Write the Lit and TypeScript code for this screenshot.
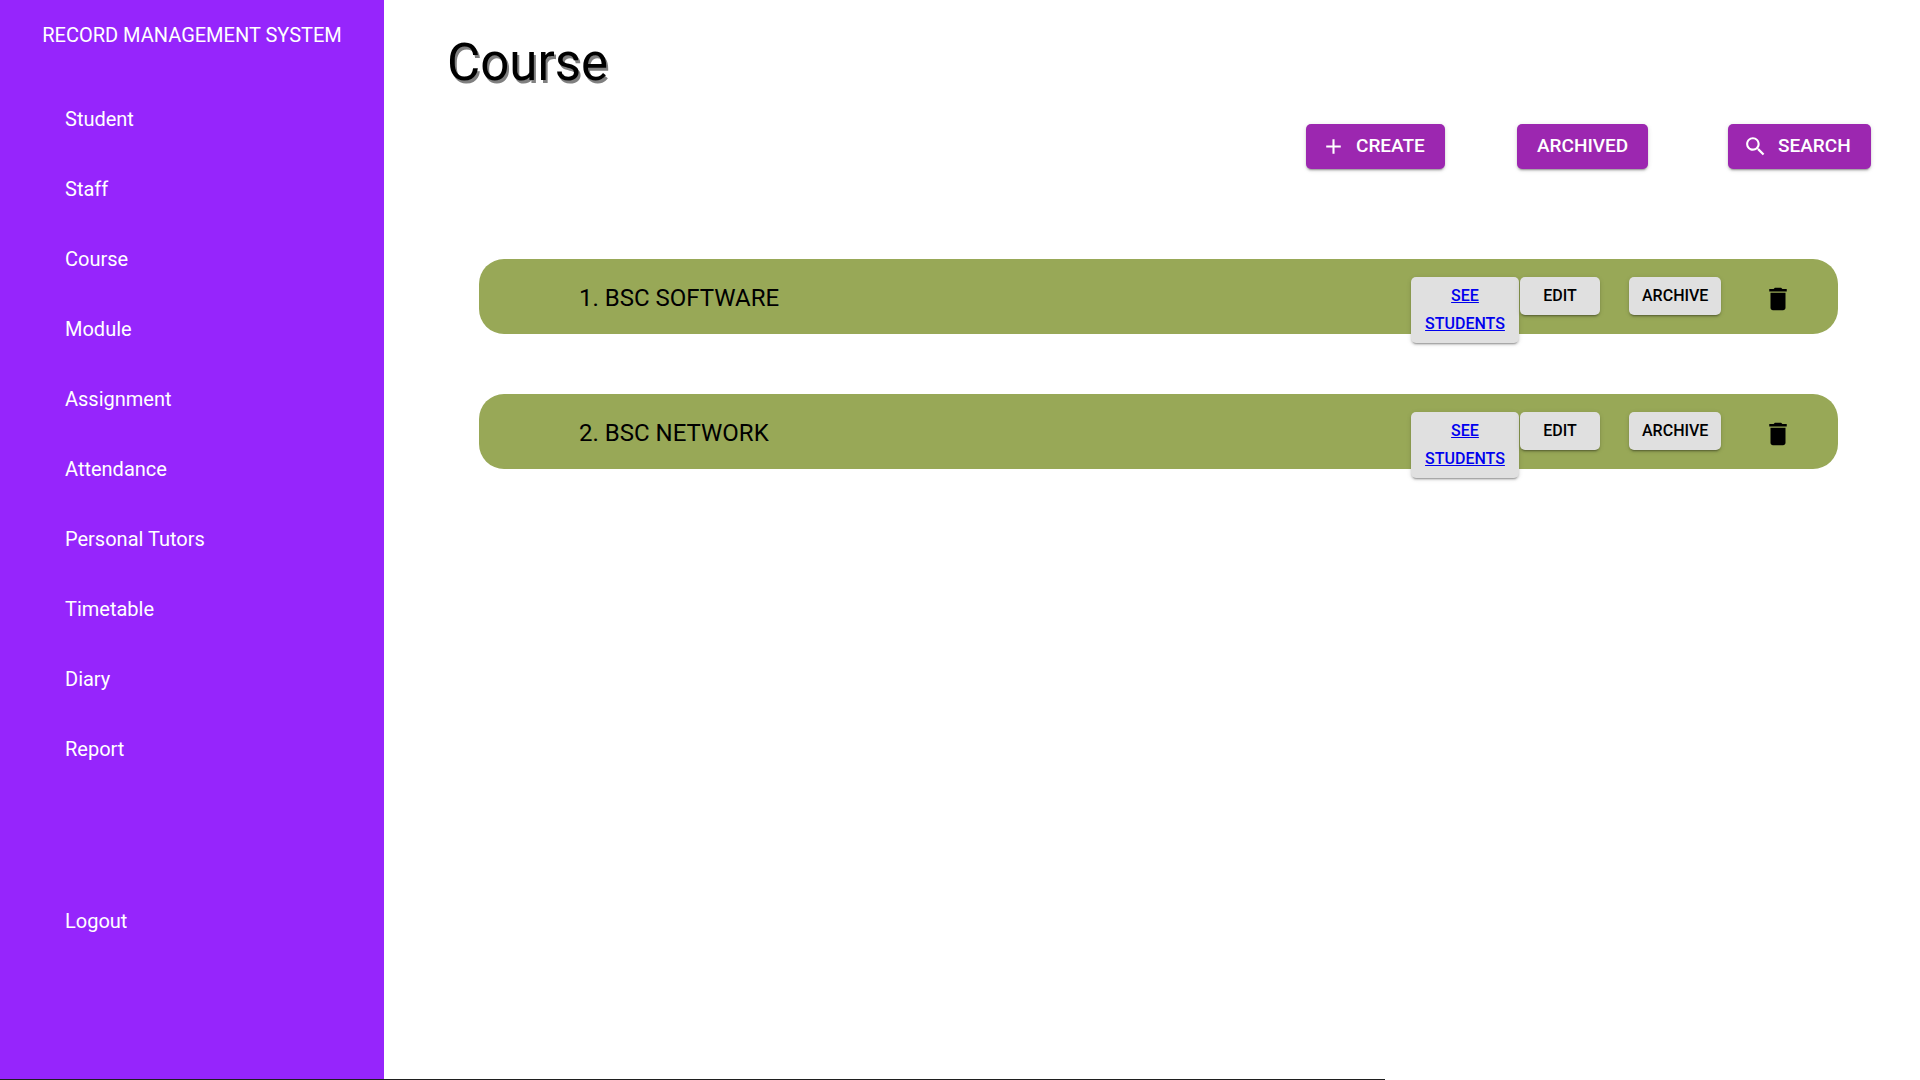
import { LitElement, html, css, svg } from "lit";
import { customElement, property, state } from "lit/decorators.js";

const ICONS = {
  add: "M19 13h-6v6h-2v-6H5v-2h6V5h2v6h6v2z",
  search:
    "M15.5 14h-.79l-.28-.27C15.41 12.59 16 11.11 16 9.5 16 5.91 13.09 3 9.5 3S3 5.91 3 9.5 5.91 16 9.5 16c1.61 0 3.09-.59 4.23-1.57l.27.28v.79l5 4.99L20.49 19l-4.99-5zm-6 0C7.01 14 5 11.99 5 9.5S7.01 5 9.5 5 14 7.01 14 9.5 11.99 14 9.5 14z",
  trash:
    "M6 19c0 1.1.9 2 2 2h8c1.1 0 2-.9 2-2V7H6v12zM19 4h-3.5l-1-1h-5l-1 1H5v2h14V4z",
};

const icon = (name: keyof typeof ICONS) => html`
  <svg class="icon" viewBox="0 0 24 24" aria-hidden="true">
    ${svg`<path d=${ICONS[name]} />`}
  </svg>
`;

@customElement("side-nav")
class SideNav extends LitElement {
  static styles = css`
    :host {
      display: block;
      background: #9625fc;
      color: #fff;
      font-size: 20px;
      line-height: 30px;
    }
    .brand {
      margin: 0;
      padding: 20px 0 34px;
      font-size: 20px;
      font-weight: 400;
      line-height: 30px;
      text-align: center;
    }
    .list {
      list-style: none;
      margin: 0;
      padding: 0;
    }
    .link {
      display: block;
      padding: 20px 65px;
      color: inherit;
      text-decoration: none;
    }
    .logout {
      margin-top: 102px;
    }
  `;

  private items = [
    "Student",
    "Staff",
    "Course",
    "Module",
    "Assignment",
    "Attendance",
    "Personal Tutors",
    "Timetable",
    "Diary",
    "Report",
  ];

  render() {
    return html`
      <h2 class="brand">RECORD MANAGEMENT SYSTEM</h2>
      <nav>
        <ul class="list">
          ${this.items.map(
            (item) => html`<li><a class="link" href="#">${item}</a></li>`
          )}
          <li class="logout"><a class="link" href="#">Logout</a></li>
        </ul>
      </nav>
    `;
  }
}

@customElement("course-row")
class CourseRow extends LitElement {
  @property({ type: Number }) index = 0;
  @property() name = "";

  static styles = css`
    :host {
      display: grid;
      grid-template-columns: minmax(0, 1fr) 108px 108px 112px 72px;
      column-gap: 1px;
      align-items: start;
      height: 75px;
      box-sizing: border-box;
      padding: 18px 24px 0 100px;
      border-radius: 25px;
      background: #98a857;
    }
    .name {
      margin: 0;
      padding-top: 3px;
      font-size: 24px;
      font-weight: 400;
      line-height: 36px;
    }
    .btn {
      justify-self: start;
      box-sizing: border-box;
      min-width: 80px;
      margin: 0;
      padding: 5px 13px;
      border: 0;
      border-radius: 5px;
      background: #e0e0e0;
      color: #000;
      font: 500 16px/28px Roboto, sans-serif;
      text-align: center;
      cursor: pointer;
      box-shadow: 0 3px 1px -2px rgba(0, 0, 0, 0.2),
        0 2px 2px 0 rgba(0, 0, 0, 0.14), 0 1px 5px 0 rgba(0, 0, 0, 0.12);
    }
    .students {
      width: 108px;
      color: #00e;
      text-decoration: underline;
    }
    .remove {
      justify-self: center;
      display: flex;
      margin: 0;
      padding: 7px 0 0;
      border: 0;
      background: none;
      cursor: pointer;
    }
    .icon {
      width: 30px;
      height: 30px;
      fill: #000;
    }
  `;

  render() {
    return html`
      <h3 class="name">${this.index}. ${this.name}</h3>
      <a class="btn students" href="#">SEE STUDENTS</a>
      <button class="btn" type="button">EDIT</button>
      <button class="btn" type="button">ARCHIVE</button>
      <button class="remove" type="button" aria-label="Delete">
        ${icon("trash")}
      </button>
    `;
  }
}

@customElement("app-root")
class AppRoot extends LitElement {
  @state() private courses = ["BSC SOFTWARE", "BSC NETWORK"];

  static styles = css`
    :host {
      display: grid;
      grid-template-columns: 20% minmax(0, 1fr);
      grid-template-rows: 1fr 1px;
      min-height: 100vh;
      background: #fff;
      color: #000;
      font-family: Roboto, sans-serif;
    }
    .title {
      margin: 0;
      padding: 31px 63px 0;
      font-size: 51px;
      font-weight: 400;
      line-height: 64px;
      text-shadow: 2px 3px 0 #808080;
    }
    .toolbar {
      display: grid;
      grid-template-columns: repeat(3, 142px);
      justify-content: end;
      column-gap: 69px;
      padding: 29px 50px 0 0;
    }
    .action {
      justify-self: start;
      display: flex;
      align-items: center;
      gap: 10px;
      margin: 0;
      padding: 6px 20px 7px;
      border: 0;
      border-radius: 5px;
      background: #9c27b0;
      color: #fff;
      font: 500 19px/32px Roboto, sans-serif;
      cursor: pointer;
      box-shadow: 0 3px 1px -2px rgba(0, 0, 0, 0.2),
        0 2px 2px 0 rgba(0, 0, 0, 0.14), 0 1px 5px 0 rgba(0, 0, 0, 0.12);
    }
    .with-icon {
      padding-left: 15px;
    }
    .icon {
      width: 25px;
      height: 25px;
      fill: currentColor;
    }
    .courses {
      display: flex;
      flex-direction: column;
      gap: 60px;
      padding: 90px 82px 0 95px;
    }
    .rule {
      grid-column: 1 / -1;
      max-width: 1385px;
      background: #1f1f1f;
    }
  `;

  render() {
    return html`
      <side-nav></side-nav>
      <main>
        <h1 class="title">Course</h1>
        <div class="toolbar">
          <button class="action with-icon" type="button">
            ${icon("add")} CREATE
          </button>
          <button class="action" type="button">ARCHIVED</button>
          <button class="action with-icon" type="button">
            ${icon("search")} SEARCH
          </button>
        </div>
        <section class="courses">
          ${this.courses.map(
            (name, i) =>
              html`<course-row .index=${i + 1} .name=${name}></course-row>`
          )}
        </section>
      </main>
      <div class="rule"></div>
    `;
  }
}
